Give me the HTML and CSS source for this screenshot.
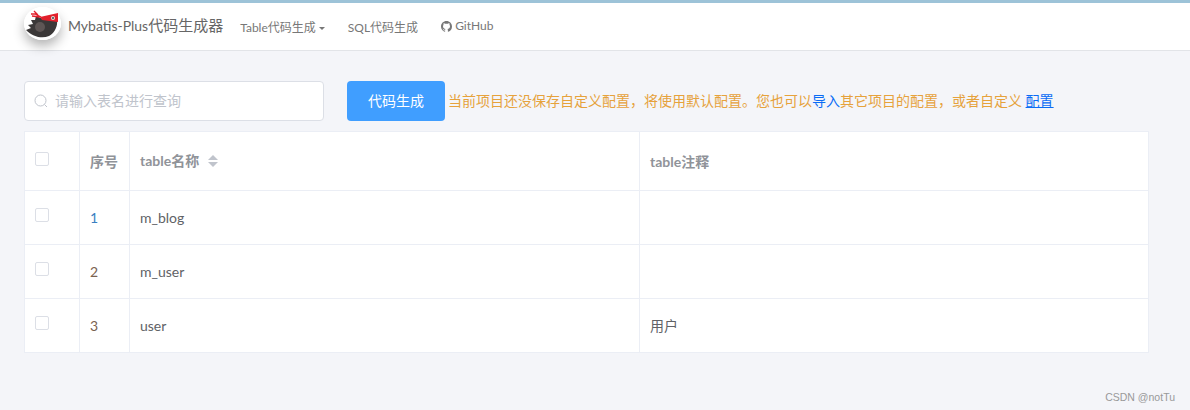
FILE: index.html
```html
<!DOCTYPE html>
<html lang="zh-CN">
<head>
    <meta charset="UTF-8">
    <title>Mybatis-Plus代码生成器</title>
    <link rel="stylesheet" href="styles.css">
</head>

<body>
    <nav class="navbar">
        <a class="brand">
            <span class="logo">
                <svg width="37" height="33" viewBox="0 0 37 33">
                    <ellipse cx="18.5" cy="16.5" rx="18.5" ry="16.5" fill="#fff"/>
                    <path d="M2 23 L7 21 L4 18 L9 17 L7 13 L11 13 L12 9 L19 12 L33 13 C34 20 30 26 25 29 C18 32 9 30 2 23 Z" fill="#3b3838"/>
                    <circle cx="16" cy="20" r="5" fill="#5e5655"/>
                    <path d="M16 10 L34 6 L34 15 L18 13 Z" fill="#e2202c"/>
                    <path d="M17 10 L11 7 L7 7 M14 8 L10 4 M16 10 L8 9" fill="none" stroke="#e2202c" stroke-width="1.3"/>
                    <circle cx="29" cy="11" r="2" fill="#ddd"/>
                    <circle cx="29" cy="11" r="1" fill="#444"/>
                </svg>
            </span>
            <span class="brand-name"><span class="brand-latin">Mybatis-Plus</span>代码生成器</span>
        </a>
        <ul class="nav-links">
            <li>Table代码生成<i class="caret"></i></li>
            <li>SQL代码生成</li>
            <li>
                <svg class="gh" width="11" height="11" viewBox="0 0 16 16"><path fill="#777" d="M8 0C3.58 0 0 3.58 0 8c0 3.54 2.29 6.53 5.47 7.59.4.07.55-.17.55-.38 0-.19-.01-.82-.01-1.49-2.01.37-2.53-.49-2.69-.94-.09-.23-.48-.94-.82-1.13-.28-.15-.68-.52-.01-.53.63-.01 1.08.58 1.23.82.72 1.21 1.87.87 2.33.66.07-.52.28-.87.51-1.07-1.78-.2-3.64-.89-3.64-3.95 0-.87.31-1.59.82-2.15-.08-.2-.36-1.02.08-2.12 0 0 .67-.21 2.2.82.64-.18 1.32-.27 2-.27s1.36.09 2 .27c1.53-1.04 2.2-.82 2.2-.82.44 1.1.16 1.92.08 2.12.51.56.82 1.27.82 2.15 0 3.07-1.87 3.75-3.65 3.95.29.25.54.73.54 1.48 0 1.07-.01 1.93-.01 2.2 0 .21.15.46.55.38A8.01 8.01 0 0016 8c0-4.42-3.58-8-8-8z"/></svg>
                GitHub
            </li>
        </ul>
    </nav>

    <main class="content">
        <div class="toolbar">
            <div class="search">
                <svg width="14" height="14" viewBox="0 0 14 14"><circle cx="6.5" cy="6.5" r="5.5" fill="none" stroke="#c0c4cc"/><path d="M10.5 10.5 L13 13" stroke="#c0c4cc"/></svg>
                <input type="text" placeholder="请输入表名进行查询">
            </div>
            <button class="btn-primary">代码生成</button>
            <p class="notice">当前项目还没保存自定义配置，将使用默认配置。您也可以<a>导入</a>其它项目的配置，或者自定义 <a class="underline">配置</a></p>
        </div>

        <table class="data-table">
            <colgroup>
                <col class="col-check">
                <col class="col-num">
                <col class="col-name">
                <col>
            </colgroup>
            <thead>
                <tr>
                    <th><span class="checkbox"></span></th>
                    <th>序号</th>
                    <th class="th-name">table名称 <span class="sort"><i class="up"></i><i class="down"></i></span></th>
                    <th>table注释</th>
                </tr>
            </thead>
            <tbody>
                <tr>
                    <td><span class="checkbox"></span></td>
                    <td class="num-blue">1</td>
                    <td>m_blog</td>
                    <td></td>
                </tr>
                <tr>
                    <td><span class="checkbox"></span></td>
                    <td class="num-brown">2</td>
                    <td>m_user</td>
                    <td></td>
                </tr>
                <tr>
                    <td><span class="checkbox"></span></td>
                    <td class="num-brown">3</td>
                    <td>user</td>
                    <td class="cjk-cell">用户</td>
                </tr>
            </tbody>
        </table>
    </main>

    <span class="watermark">CSDN @notTu</span>
</body>
</html>
```

FILE: styles.css
```css
html, body {
    height: 100%;
}

body {
    margin: 0;
    position: relative;
    overflow: hidden;
    background-color: #f4f5f9;
    color: #606266;
    font-family: Lato, "Noto Sans CJK SC", sans-serif;
    font-size: 14px;
}

.navbar {
    display: flex;
    align-items: center;
    height: 47px;
    padding-left: 24px;
    background-color: #fff;
    border-top: 3px solid #9dc3d8;
    border-bottom: 1px solid #e2e4e8;
}

.brand {
    display: flex;
    align-items: center;
    gap: 7px;
    font-size: 15px;
    color: #666;
}

.brand-name {
    padding-bottom: 5px;
}

.brand-latin {
    font-size: 14px;
}

.logo {
    display: block;
    width: 37px;
    height: 33px;
    margin-bottom: 6px;
    border-radius: 50%;
    box-shadow: 0 6px 12px rgba(0, 0, 0, 0.3);
}

.nav-links {
    display: flex;
    gap: 23px;
    margin: 0 0 0 17px;
    padding: 0;
    list-style: none;
    font-size: 12px;
    color: #777;
}

.caret {
    display: inline-block;
    margin-left: 3px;
    vertical-align: 2px;
    border-top: 3px solid #777;
    border-left: 3px solid transparent;
    border-right: 3px solid transparent;
}

.gh {
    vertical-align: -2px;
}

.content {
    padding: 30px 41px 0 24px;
}

.toolbar {
    display: flex;
    align-items: center;
    height: 40px;
    margin-bottom: 10px;
}

.search {
    display: flex;
    align-items: center;
    gap: 7px;
    box-sizing: border-box;
    width: 300px;
    height: 40px;
    padding-left: 9px;
    background-color: #fff;
    border: 1px solid #dcdfe6;
    border-radius: 4px;
}

.search input {
    flex: 1;
    min-width: 0;
    border: none;
    outline: none;
    padding: 0 0 2px;
    font: inherit;
    color: #606266;
}

.search input::placeholder {
    color: #c0c4cc;
}

.btn-primary {
    width: 98px;
    height: 40px;
    margin-left: 23px;
    padding: 0 0 2px;
    border: none;
    border-radius: 4px;
    background-color: #409eff;
    color: #fff;
    font: inherit;
}

.notice {
    margin: 0 0 0 3px;
    padding-bottom: 2px;
    color: #e6a23c;
    white-space: nowrap;
}

.notice a {
    color: #0a6cf5;
}

.notice .underline {
    text-decoration: underline;
    text-underline-offset: 1px;
}

.data-table {
    width: 100%;
    table-layout: fixed;
    border-collapse: collapse;
    background-color: #fff;
}

.col-check {
    width: 55px;
}

.col-num {
    width: 50px;
}

.col-name {
    width: 510px;
}

.data-table th, .data-table td {
    box-sizing: border-box;
    padding: 0 10px;
    border: 1px solid #ebeef5;
    text-align: left;
}

.data-table th {
    height: 59px;
    color: #909399;
    font-weight: 700;
}

.data-table td {
    height: 54px;
    color: #606266;
}

.data-table th:first-child, .data-table td:first-child {
    padding: 0 0 0 10px;
    vertical-align: top;
}

.data-table th:first-child {
    padding-top: 20px;
}

.data-table td:first-child {
    padding-top: 17px;
}

.data-table .th-name {
    padding-bottom: 3px;
}

.data-table .cjk-cell {
    padding-bottom: 2px;
}

.checkbox {
    display: block;
    box-sizing: border-box;
    width: 14px;
    height: 14px;
    background-color: #fff;
    border: 1px solid #dcdfe6;
    border-radius: 2px;
}

.data-table .num-blue {
    color: #3a7fc1;
}

.data-table .num-brown {
    color: #7a6250;
}

.sort {
    display: inline-block;
    margin-left: 5px;
    vertical-align: -1px;
}

.sort i {
    display: block;
    border-left: 5px solid transparent;
    border-right: 5px solid transparent;
}

.sort .up {
    margin-bottom: 2px;
    border-bottom: 5px solid #c0c4cc;
}

.sort .down {
    border-top: 5px solid #c0c4cc;
}

.watermark {
    position: absolute;
    right: 15px;
    bottom: 7px;
    font-family: "Liberation Sans", sans-serif;
    font-size: 10.5px;
    color: #999;
}
```
